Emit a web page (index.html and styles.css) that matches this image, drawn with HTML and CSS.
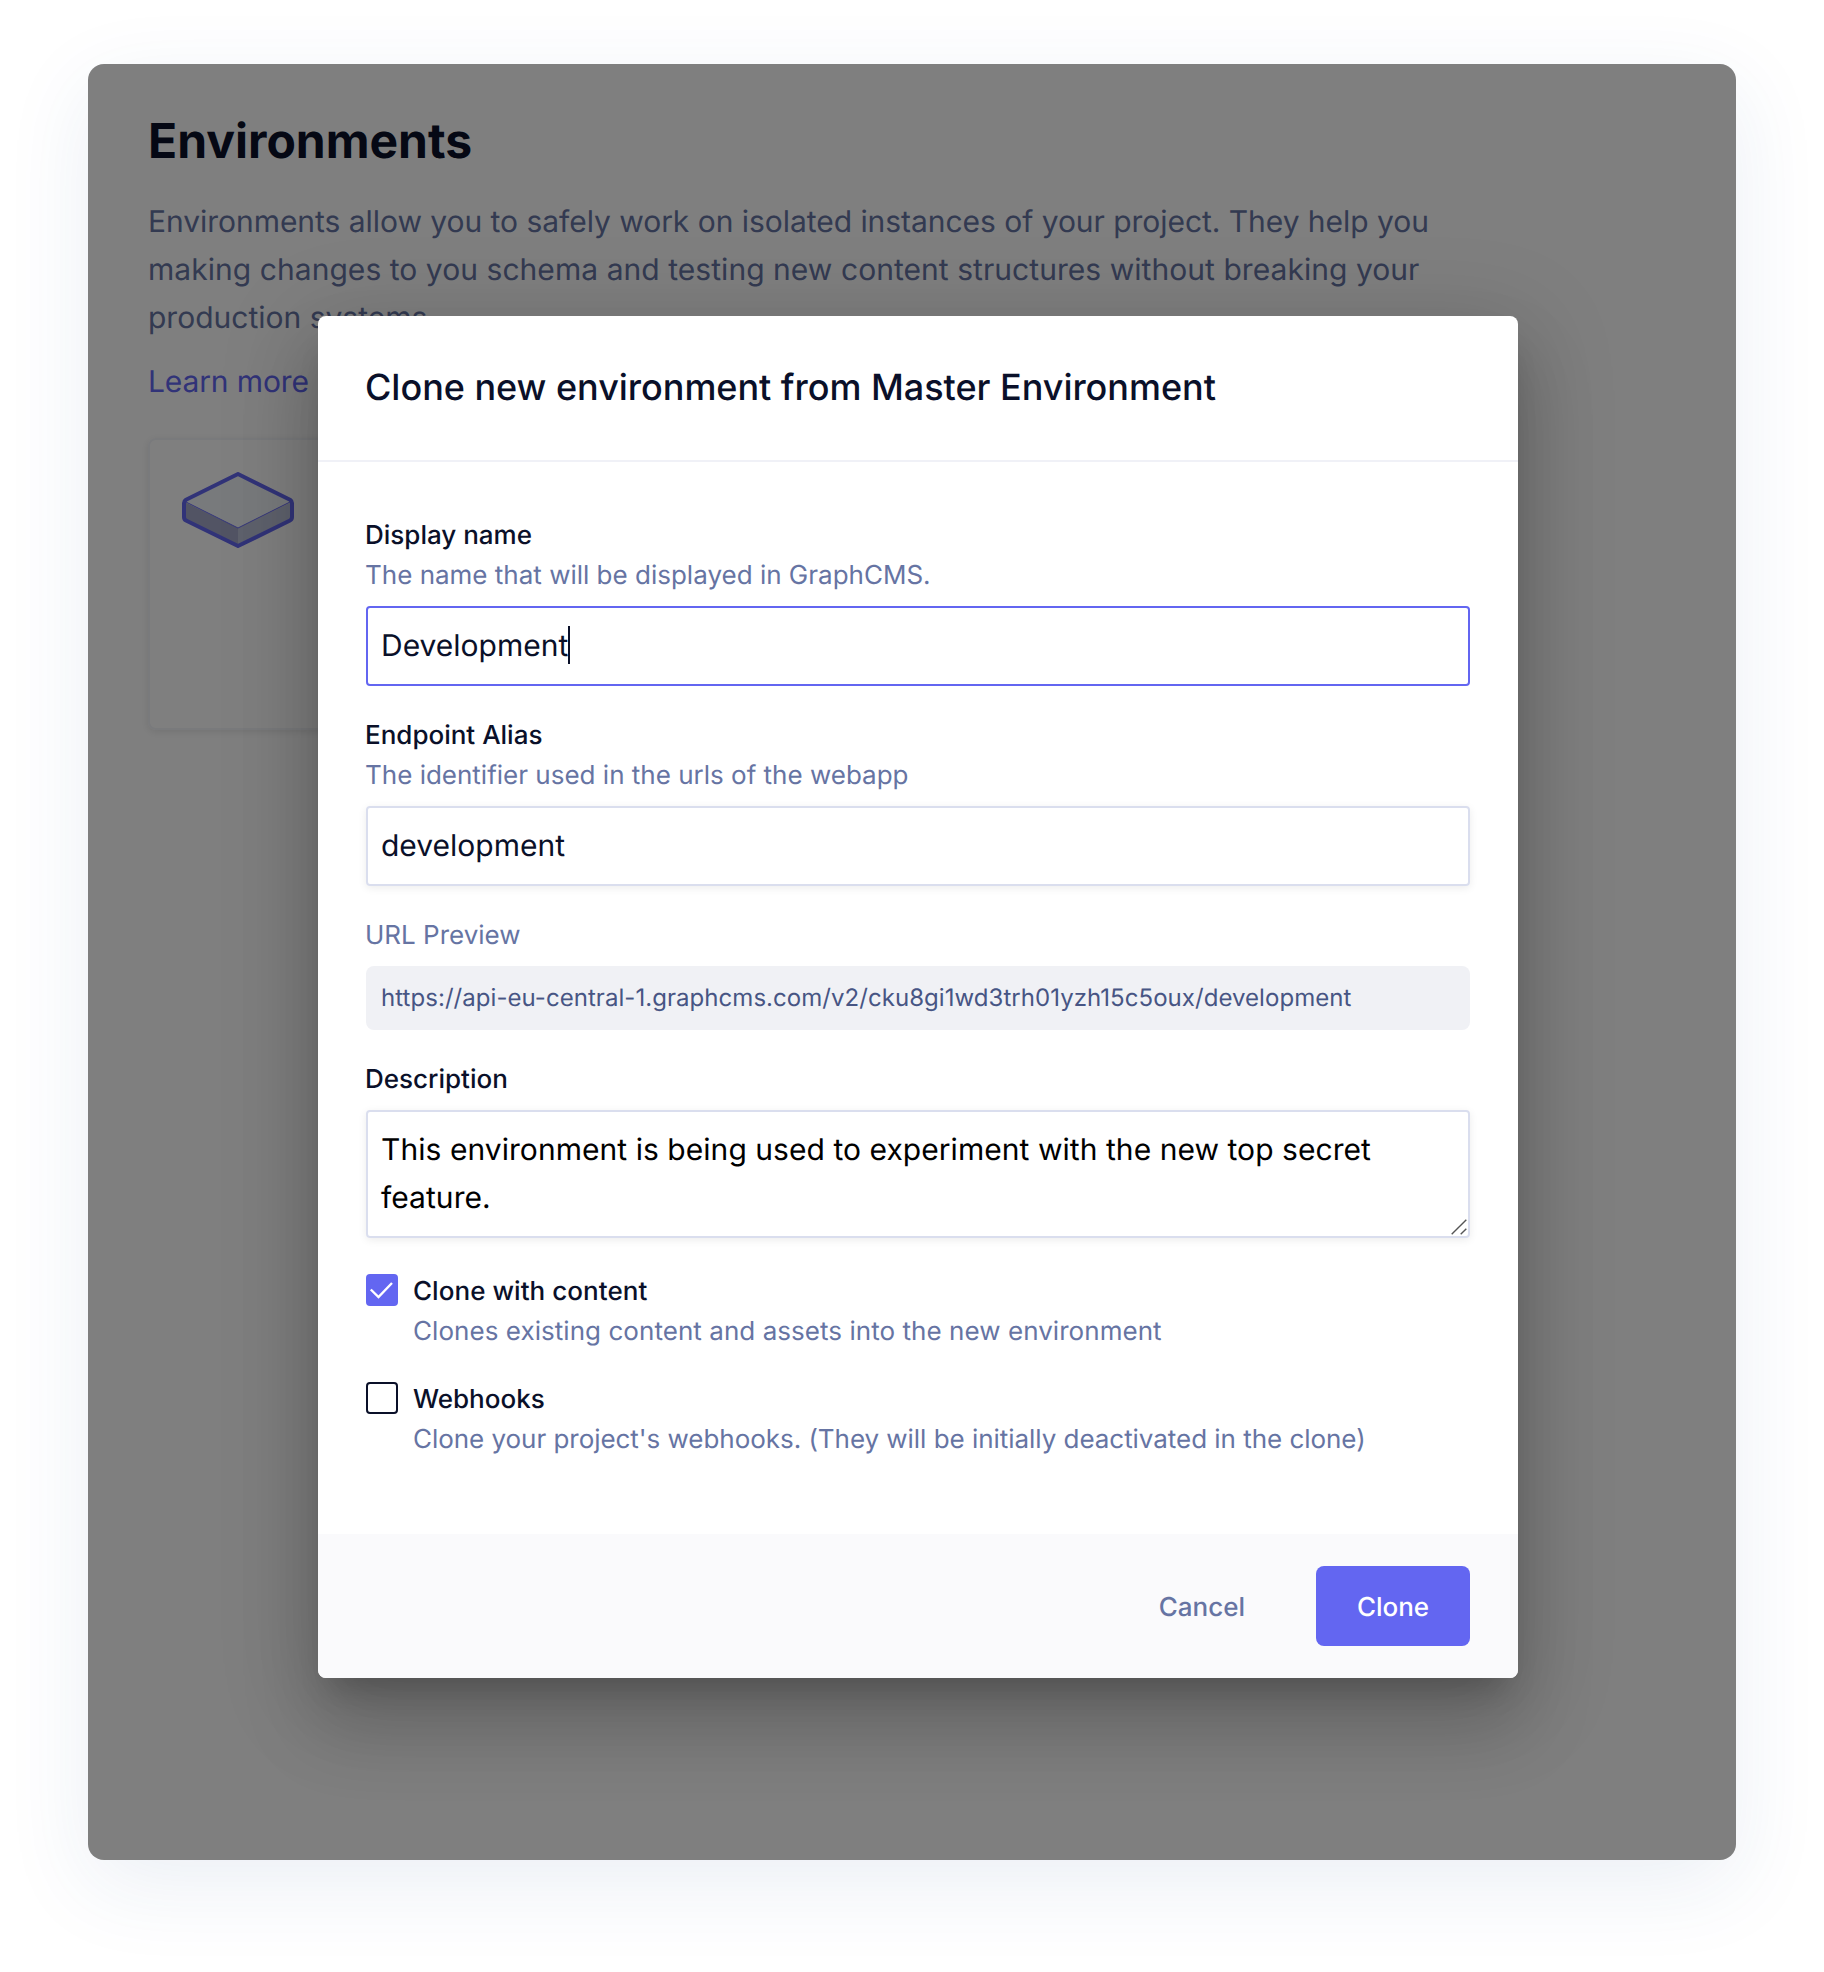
FILE: index.html
```html
<!DOCTYPE html>
<html lang="en">
<head>
<meta charset="utf-8">
<title>Environments</title>
<link rel="stylesheet" href="styles.css">
</head>
<body>
<main class="panel">
  <section class="page">
    <h1 class="page-title">Environments</h1>
    <p class="page-text"><span class="tight">Environments allow you to safely work on isolated instances of your project. They help you</span><br><span class="loose">making changes to you schema and testing new content structures without breaking your</span><br>production systems.</p>
    <a class="page-link">Learn more</a>
    <div class="card">
      <svg class="card-icon" width="112" height="76" viewBox="0 0 112 76">
        <path d="M3 30 56 56V74L3 47Z" fill="#a4a9c9"/>
        <path d="M109 30 56 56V74L109 47Z" fill="#bcc2d8"/>
        <path d="M56 3 109 30 56 56 3 30Z" fill="#f1f4f8"/>
        <path d="M3 29.500 56 56 109 29.500" fill="none" stroke="#6366f1" stroke-width="1"/>
        <path d="M56 2 108 27.700Q110 29 110 31V45Q110 47.500 108 48.500L56 74 4 48.500Q2 47.500 2 45V31Q2 29 4 27.700Z" fill="none" stroke="#6366f1" stroke-width="4" stroke-linejoin="round"/>
      </svg>
    </div>
  </section>
  <div class="overlay">
    <div class="modal">
      <header class="modal-head"><h2 class="modal-title">Clone new environment from Master Environment</h2></header>
      <form class="modal-body">
        <div class="field">
          <div class="label">Display name</div>
          <div class="help">The name that will be displayed in GraphCMS.</div>
          <div class="input focused"><span class="value">Development</span><span class="caret"></span></div>
        </div>
        <div class="field">
          <div class="label">Endpoint Alias</div>
          <div class="help">The identifier used in the urls of the webapp</div>
          <div class="input"><span class="value">development</span></div>
        </div>
        <div class="field">
          <div class="help">URL Preview</div>
          <div class="url"><span class="loose">https://api-eu-central-1.graphcms.com/v2/cku8gi1wd3trh01yzh15c5oux/development</span></div>
        </div>
        <div class="field">
          <div class="label">Description</div>
          <div class="input area"><span class="value loose">This environment is being used to experiment with the new top secret<br>feature.</span>
            <svg class="grip" width="16" height="16" viewBox="0 0 16 16"><path d="M.7 15.300 15.300.7M9.700 15.300 15.300 9.700" stroke="#555" stroke-width="1.400"/></svg>
          </div>
        </div>
        <div class="check-row">
          <span class="box checked"><svg width="32" height="32" viewBox="0 0 32 32"><path d="M4.800 15.500 12.500 23 26 9" fill="none" stroke="#fff" stroke-width="2.400"/></svg></span>
          <div><div class="label loose">Clone with content</div><div class="help loose">Clones existing content and assets into the new environment</div></div>
        </div>
        <div class="check-row">
          <span class="box"></span>
          <div><div class="label">Webhooks</div><div class="help tight">Clone your project's webhooks. (They will be initially deactivated in the clone)</div></div>
        </div>
      </form>
      <footer class="modal-foot">
        <span class="cancel">Cancel</span>
        <span class="submit">Clone</span>
      </footer>
    </div>
  </div>
</main>
</body>
</html>
```
FILE: styles.css
```css
* { box-sizing: border-box; }
body {
  margin: 0;
  height: 1972px;
  padding: 64px 88px 112px;
  background: #fff;
  font-family: Inter, sans-serif;
  color: #0a1029;
  text-rendering: geometricPrecision;
  overflow: hidden;
}
.tight { letter-spacing: -.04px; }
.loose { letter-spacing: .05px; }
.panel {
  position: relative;
  height: 1796px;
  border-radius: 16px;
  background: #fff;
  box-shadow: 0 24px 88px rgba(35, 80, 140, .09);
  overflow: hidden;
}
.page { padding: 47px 60px; }
.page-title { margin: 0; font-size: 48px; line-height: 60px; font-weight: 700; }
.page-text { margin: 27px 0 0; font-size: 30px; line-height: 48px; color: #6674a3; white-space: nowrap; }
.page-link { display: block; margin-top: 16px; font-size: 30px; line-height: 48px; letter-spacing: -.12px; color: #6366f1; }
.card {
  width: 560px;
  height: 292px;
  margin-top: 32px;
  padding: 32px;
  border: 2px solid #f3f4f9;
  border-radius: 8px;
  box-shadow: 0 2px 8px rgba(0, 0, 0, .1);
}
.card-icon { display: block; }
.overlay {
  position: absolute;
  inset: 0;
  padding: 252px 0 0 230px;
  background: rgba(0, 0, 0, .5);
}
.modal {
  width: 1200px;
  background: #fff;
  border-radius: 8px;
  overflow: hidden;
  box-shadow: 0 22px 30px -14px rgba(0, 0, 0, .2), 0 48px 76px 6px rgba(0, 0, 0, .14), 0 18px 92px 16px rgba(0, 0, 0, .12);
}
.modal-head { height: 146px; padding: 47px 47px 0; border-bottom: 2px solid #f0f1f7; }
.modal-title { margin: 0; font-size: 36px; line-height: 48px; font-weight: 500; letter-spacing: -.03px; white-space: nowrap; }
.modal-body { height: 1072px; padding: 54px 48px 0; }
.field { margin-bottom: 30px; }
.label, .help { margin-left: -1px; font-size: 26px; line-height: 40px; white-space: nowrap; }
.label { font-weight: 500; }
.help { color: #6674a3; }
.input {
  position: relative;
  display: flex;
  align-items: center;
  height: 80px;
  margin-top: 10px;
  padding: 0 13px;
  border: 2px solid #dadeee;
  border-radius: 4px;
  font-size: 30px;
  line-height: 48px;
  white-space: nowrap;
  box-shadow: 0 2px 8px rgba(0, 0, 0, .08);
}
.focused { border-color: #6366f1; box-shadow: none; }
.caret { width: 2px; height: 38px; margin-top: -2px; background: #0a1029; }
.area { height: 128px; color: #000; }
.grip { position: absolute; right: 1px; bottom: 1px; }
.url {
  display: flex;
  align-items: center;
  height: 64px;
  margin-top: 10px;
  padding: 0 15px 2px;
  border-radius: 8px;
  background: #f0f1f5;
  color: #475584;
  font-size: 24px;
  white-space: nowrap;
}
.check-row { display: flex; gap: 16px; margin-top: 28px; }
.field + .check-row { margin-top: 34px; }
.box { width: 32px; height: 32px; margin-top: 2px; border: 2px solid #0a1029; border-radius: 4px; }
.checked { border: 0; background: #6366f1; }
.checked svg { display: block; }
.modal-foot {
  display: flex;
  justify-content: flex-end;
  align-items: center;
  gap: 71px;
  height: 144px;
  padding: 0 48px;
  background: #fafafc;
  font-size: 26px;
  font-weight: 500;
}
.cancel { padding-top: 2px; color: #6674a3; }
.submit { width: 154px; height: 80px; padding-top: 2px; line-height: 80px; border-radius: 8px; background: #6366f1; color: #fff; text-align: center; }
```
